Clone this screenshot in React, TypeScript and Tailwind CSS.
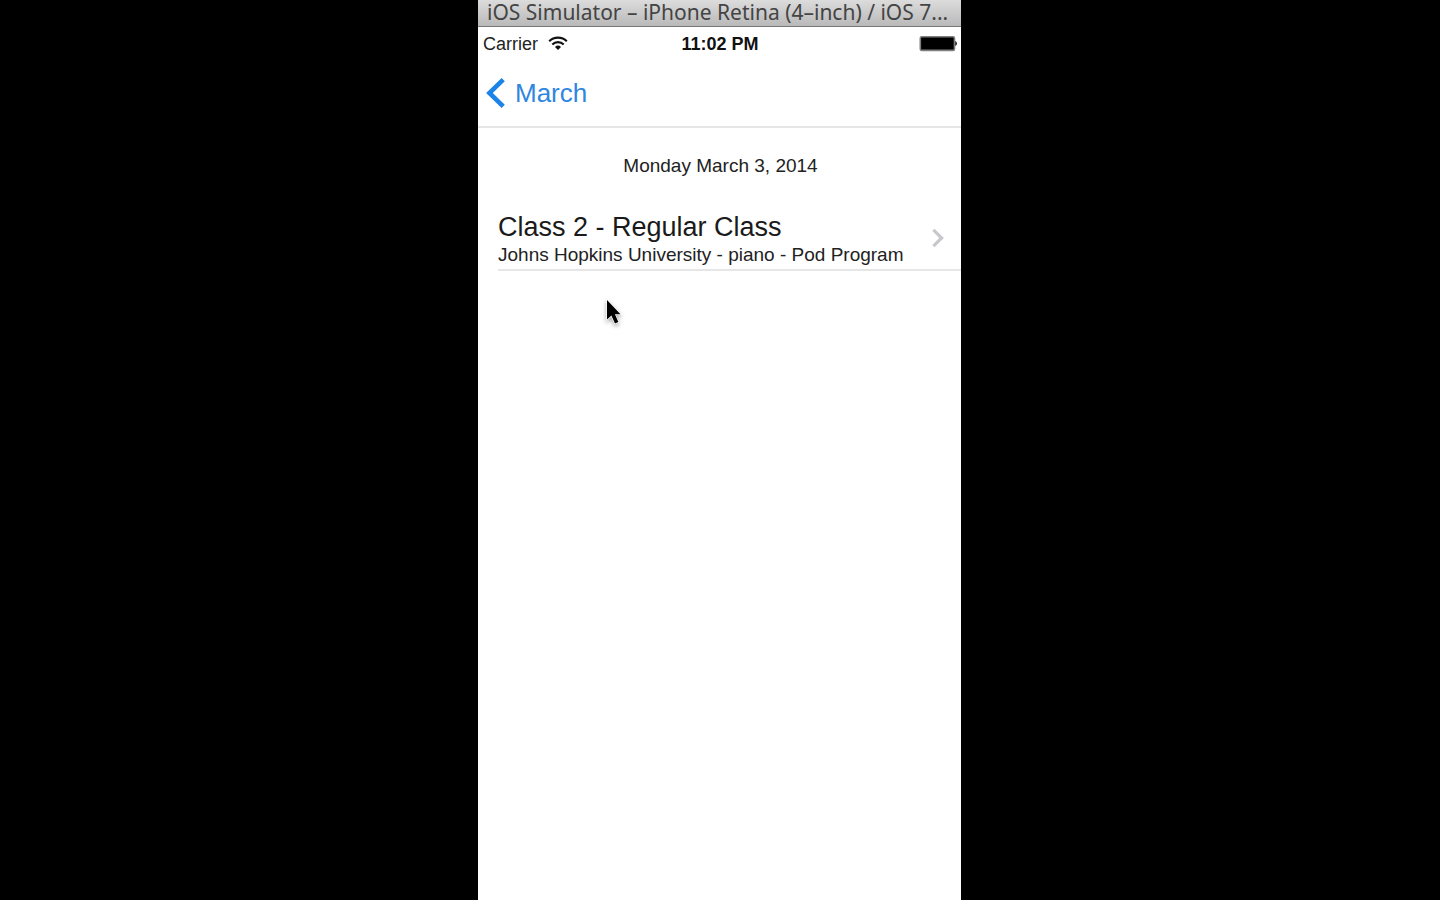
import React from "react";

function WifiIcon() {
  return (
    <svg viewBox="0 1 20 15" className="h-[15px] w-5 overflow-visible" fill="none" stroke="#111" strokeWidth="2.2" aria-hidden="true">
      <path d="M1.2 5.2a12.6 12.6 0 0 1 17.6 0" />
      <path d="M4.3 8.5a8.2 8.2 0 0 1 11.4 0" />
      <path d="M7 11a4.4 4.4 0 0 1 6 0L10 14z" fill="#111" stroke="none" />
    </svg>
  );
}

function BatteryIcon() {
  return (
    <svg viewBox="0 0 38 17" className="h-[17px] w-[38px]" role="img" aria-label="Battery full">
      <rect x="1.3" y="0.8" width="34.2" height="13.6" rx="1.5" fill="#000" stroke="#808080" strokeWidth="1.6" />
      <path d="M36.2 5v5q1.8-.6 1.8-2.5T36.2 5z" fill="#222" />
    </svg>
  );
}

function BackIcon() {
  return (
    <svg viewBox="0 1 20 32" className="h-8 w-5 overflow-visible" fill="none" stroke="#1c83e8" strokeWidth="4.6" aria-hidden="true">
      <path d="M17.2 2.6 3.4 16l13.8 13.4" />
    </svg>
  );
}

function DisclosureIcon() {
  return (
    <svg viewBox="0 2 14 20" className="h-5 w-[14px] shrink-0 overflow-visible" fill="none" stroke="#c7c7cc" strokeWidth="3.2" aria-hidden="true">
      <path d="m2.4 1.8 8.2 8.2-8.2 8.2" />
    </svg>
  );
}

function Pointer() {
  return (
    <svg
      viewBox="0 0 24 34"
      className="pointer-events-none absolute top-[297px] left-[125px] h-[34px] w-6 drop-shadow-[0_2px_2px_rgba(0,0,0,0.35)]"
      aria-hidden="true"
    >
      <path
        d="M4 3v19.6l4.4-4 3.6 8 3.4-1.5-3.5-7.8h5.6z"
        fill="#000"
        stroke="#fff"
        strokeWidth="1.4"
        paintOrder="stroke"
      />
    </svg>
  );
}

export default function App() {
  return (
    <div className="grid min-h-screen grid-cols-[478fr_483fr_479fr] bg-black font-['Liberation_Sans',Arial,sans-serif] text-[#222]">
      <div className="relative col-start-2 flex min-w-0 flex-col bg-white">
        <div className="h-[27px] border-b border-[#777] bg-linear-to-b from-[#dcdcdc] to-[#b9b9b9] px-[9px]">
          <h1 className="font-['Noto_Sans','Open_Sans',sans-serif] text-[21px] leading-[25px] whitespace-nowrap text-[#444]">
            iOS Simulator – iPhone Retina (4–inch) / iOS 7...
          </h1>
        </div>

        <header className="border-b-2 border-[#e6e6e6]">
          <div className="grid h-[34px] grid-cols-[1fr_auto_1fr] items-center pr-1 pl-[5px]">
            <div className="flex items-center gap-[10px] text-[18px]">
              <span>Carrier</span>
              <WifiIcon />
            </div>
            <time className="text-[18px] font-bold text-[#111]">11:02 PM</time>
            <div className="flex justify-end">
              <BatteryIcon />
            </div>
          </div>
          <nav className="flex h-[65px] items-center px-2">
            <button type="button" className="flex items-center gap-[9px] text-[26px] text-[#2f86e0]">
              <BackIcon />
              <span>March</span>
            </button>
          </nav>
        </header>

        <main className="pl-5">
          <h2 className="pt-[26px] pr-[18px] text-center text-[19px] leading-6">Monday March 3, 2014</h2>
          <ul className="pt-8">
            <li className="border-b-2 border-[#e6e6e6]">
              <a href="#class-2" className="flex items-center justify-between pr-4">
                <span className="flex flex-col pt-px pb-0.5 whitespace-nowrap">
                  <span className="text-[27px] leading-8 text-[#1a1a1a]">Class 2 - Regular Class</span>
                  <span className="text-[19px] leading-6">Johns Hopkins University - piano - Pod Program</span>
                </span>
                <DisclosureIcon />
              </a>
            </li>
          </ul>
        </main>
        <Pointer />
      </div>
    </div>
  );
}
